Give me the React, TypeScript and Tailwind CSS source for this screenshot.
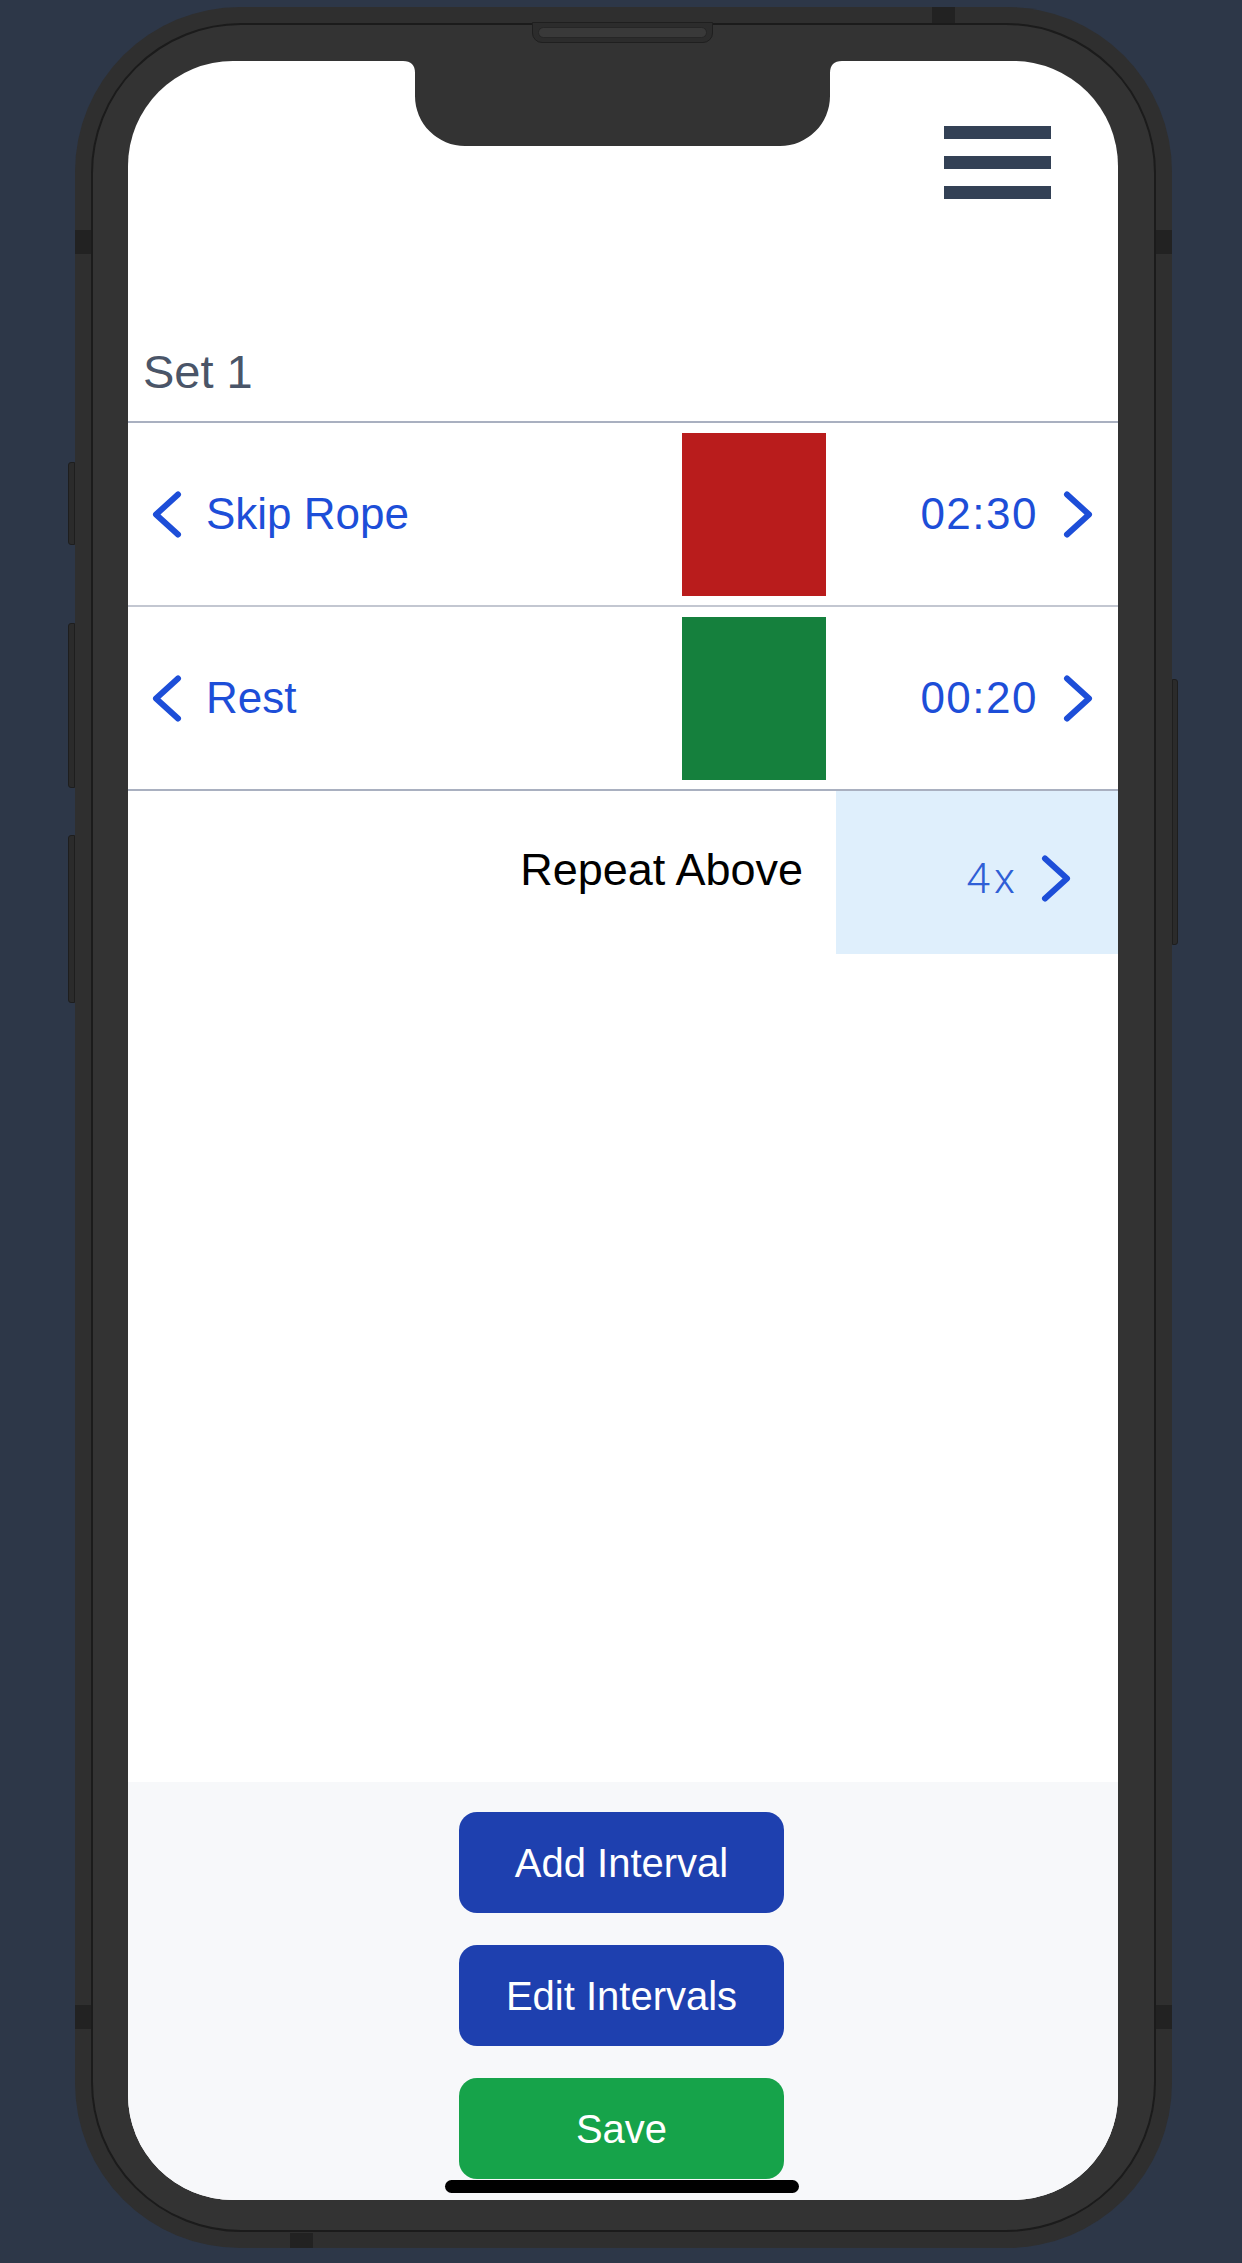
import React from 'react';

const font = { fontFamily: '"Liberation Sans", Arial, sans-serif' };

const Chevron = ({ dir, className = '' }: { dir: 'left' | 'right'; className?: string }) => (
    <svg width="30" height="47" viewBox="0 0 30 47" className={className} fill="none">
        <polyline
            points={dir === 'left' ? '26,3.5 4,23.5 26,43.5' : '4,3.5 26,23.5 4,43.5'}
            stroke="#1d4ed8"
            strokeWidth="6"
            strokeLinecap="round"
            strokeLinejoin="round"
        />
    </svg>
);

const intervals = [
    { name: 'Skip Rope', time: '02:30', color: 'bg-[#b91c1c]', border: 'border-[#c3c7d1]' },
    { name: 'Rest', time: '00:20', color: 'bg-[#15803d]', border: 'border-[#a9b0c0]' },
];

const IntervalRow = ({ name, time, color, border }: (typeof intervals)[number]) => (
    <div className={`flex h-[184px] items-center border-b-2 ${border}`}>
        <div className="flex w-[554px] items-center pl-[24px]">
            <Chevron dir="left" />
            <span className="ml-[24px] text-[44px] leading-none text-[#1d4ed8]">{name}</span>
        </div>
        <div className={`h-[163px] w-[144px] ${color}`}></div>
        <div className="flex flex-1 items-center justify-end pr-[25px]">
            <span className="text-[44px] leading-none tracking-[1.5px] text-[#1d4ed8]">{time}</span>
            <Chevron dir="right" className="ml-[25px]" />
        </div>
    </div>
);

export default function App() {
    return (
        <div className="min-h-screen bg-[#2d3748] pl-[75px] pt-[7px]" style={font}>
            {/* Phone frame */}
            <div className="relative h-[2241px] w-[1097px] rounded-[165px] bg-[#2f2f2f] p-[16px]">
                {/* side buttons */}
                <div className="absolute left-[-7px] top-[455px] h-[83px] w-[7px] rounded-l-[3px] border border-[#1e1e1e] bg-[#2b2b2b]"></div>
                <div className="absolute left-[-7px] top-[616px] h-[165px] w-[7px] rounded-l-[3px] border border-[#1e1e1e] bg-[#2b2b2b]"></div>
                <div className="absolute left-[-7px] top-[828px] h-[168px] w-[7px] rounded-l-[3px] border border-[#1e1e1e] bg-[#2b2b2b]"></div>
                <div className="absolute left-[1097px] top-[672px] h-[266px] w-[6px] rounded-r-[3px] border border-[#1e1e1e] bg-[#2b2b2b]"></div>

                {/* antenna lines */}
                <div className="absolute left-[857px] top-0 h-[16px] w-[23px] bg-[#222222]"></div>
                <div className="absolute left-[215px] top-[2226px] h-[15px] w-[23px] bg-[#222222]"></div>
                <div className="absolute left-0 top-[223px] h-[24px] w-[16px] bg-[#222222]"></div>
                <div className="absolute right-0 top-[223px] h-[24px] w-[16px] bg-[#222222]"></div>
                <div className="absolute left-0 top-[1998px] h-[24px] w-[16px] bg-[#222222]"></div>
                <div className="absolute right-0 top-[1998px] h-[24px] w-[16px] bg-[#222222]"></div>

                <div className="relative h-full rounded-[150px] border-2 border-[#1b1b1b] bg-[#333333] pb-[30px] pl-[35px] pr-[36px] pt-[36px]">
                    {/* speaker */}
                    <div className="absolute left-[439px] top-[-3px] h-[21px] w-[181px] rounded-b-[10px] border border-[#1f1f1f] bg-[#2c2c2c]">
                        <div className="ml-[5px] mt-[4px] h-[11px] w-[169px] rounded-full border border-[#262626] bg-[#393939]"></div>
                    </div>

                    {/* Screen */}
                    <div className="relative flex h-[2139px] w-[990px] flex-col overflow-hidden rounded-[105px] bg-white">
                        {/* notch */}
                        <svg className="absolute left-[275px] top-0" width="439" height="85" viewBox="0 0 439 85">
                            <path
                                d="M0 0 H439 C431 0 427 4 427 12 V35 A50 50 0 0 1 377 85 H62 A50 50 0 0 1 12 35 V12 C12 4 8 0 0 0 Z"
                                fill="#333333"
                            />
                        </svg>

                        {/* Header */}
                        <div className="relative flex h-[362px] shrink-0 items-end border-b-2 border-[#a9b0c0] pb-[26px] pl-[15px]">
                            <button className="absolute right-[67px] top-[65px] flex w-[107px] flex-col gap-[17px]">
                                <span className="block h-[13px] w-full bg-[#334155]"></span>
                                <span className="block h-[13px] w-full bg-[#334155]"></span>
                                <span className="block h-[13px] w-full bg-[#334155]"></span>
                            </button>
                            <h2 className="text-[47px] leading-none text-[#4a5568]">Set 1</h2>
                        </div>

                        {intervals.map((iv) => (
                            <IntervalRow key={iv.name} {...iv} />
                        ))}

                        {/* Repeat */}
                        <div className="flex h-[163px] shrink-0">
                            <div className="flex flex-1 items-center justify-end pb-[6px] pr-[33px]">
                                <span className="text-[45px] leading-none text-black">Repeat Above</span>
                            </div>
                            <div className="flex w-[282px] items-center justify-end bg-[#dfeffc] pr-[47px] pt-[12px]">
                                <span
                                    className="text-[43px] font-light leading-none tracking-[4px] text-[#2f5fd6]"
                                    style={{ fontFamily: 'Roboto, "Liberation Sans", sans-serif' }}
                                >
                                    4x
                                </span>
                                <Chevron dir="right" className="ml-[22px]" />
                            </div>
                        </div>

                        <div className="flex-1"></div>

                        {/* Footer actions */}
                        <div className="flex h-[418px] shrink-0 flex-col items-center gap-[32px] bg-[#f7f8fa] pr-[3px] pt-[30px]">
                            <button className="h-[101px] w-[325px] rounded-[18px] bg-[#1e40af] text-[40px] text-white">
                                Add Interval
                            </button>
                            <button className="h-[101px] w-[325px] rounded-[18px] bg-[#1e40af] text-[40px] text-white">
                                Edit Intervals
                            </button>
                            <button className="h-[101px] w-[325px] shrink-0 rounded-[18px] bg-[#16a34a] text-[40px] text-white">
                                Save
                            </button>
                        </div>

                        {/* home indicator */}
                        <div className="absolute bottom-[7px] left-[317px] h-[13px] w-[354px] rounded-full bg-black"></div>
                    </div>
                </div>
            </div>
        </div>
    );
}
